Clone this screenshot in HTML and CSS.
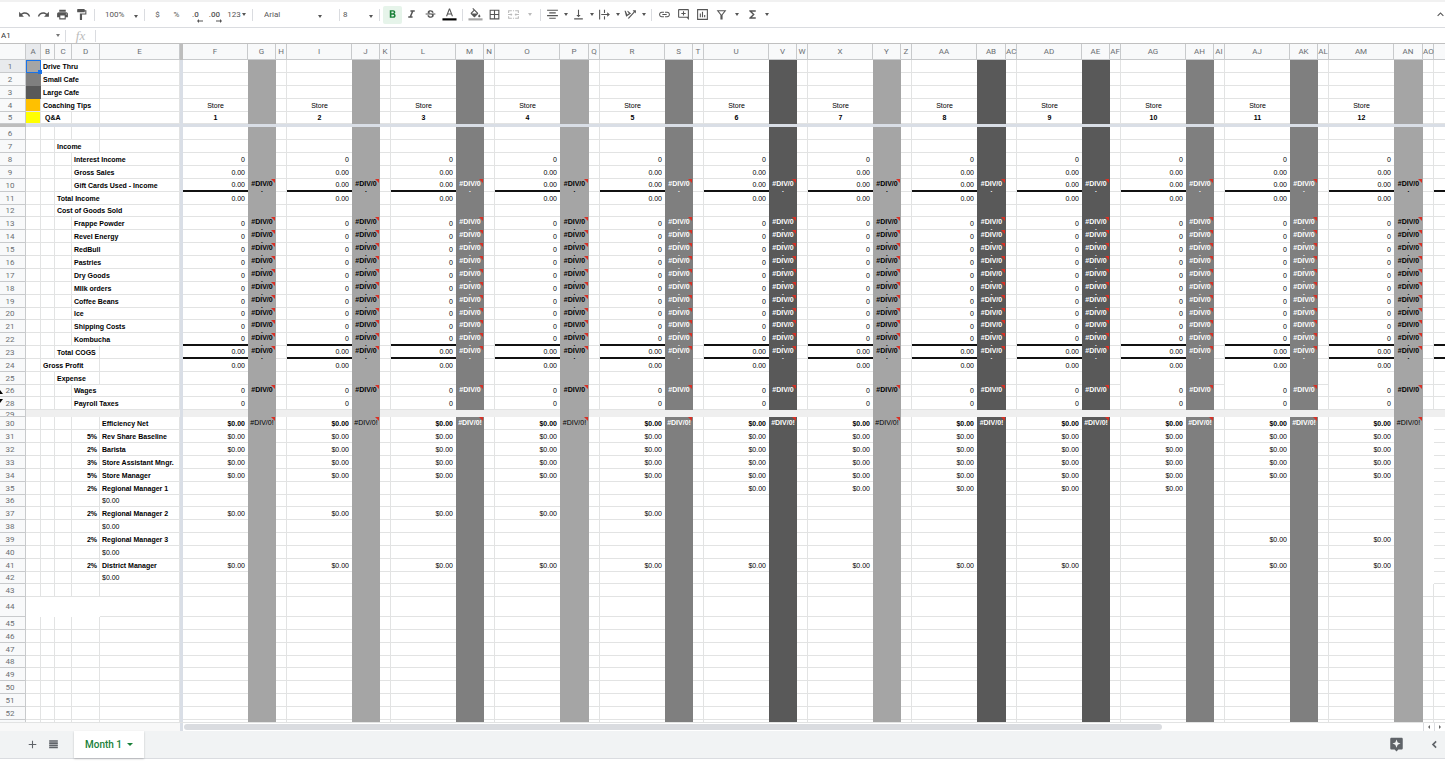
FILE: index.html
```
<!DOCTYPE html>
<html lang="en">
<head>
    <meta charset="UTF-8">
    <meta name="viewport" content="width=device-width, initial-scale=1.0">
    <title>Month 1</title>
    <link rel="stylesheet" href="styles.css">
</head>
<body>
    <header class="toolbar">
        <button class="tool" aria-label="Undo"><svg class="icon" viewBox="0 0 24 24"><path d="M12.5 8c-2.65 0-5.05.99-6.9 2.6L2 7v9h9l-3.62-3.62c1.39-1.16 3.16-1.88 5.12-1.88 3.54 0 6.55 2.31 7.6 5.5l2.37-.78C21.08 11.03 17.15 8 12.5 8z"/></svg></button>
        <button class="tool" aria-label="Redo"><svg class="icon" viewBox="0 0 24 24"><path d="M18.4 10.6C16.55 8.99 14.15 8 11.5 8c-4.65 0-8.58 3.03-9.96 7.22L3.9 16c1.05-3.19 4.05-5.5 7.6-5.5 1.95 0 3.73.72 5.12 1.88L13 16h9V7l-3.6 3.6z"/></svg></button>
        <button class="tool" aria-label="Print"><svg class="icon" viewBox="0 0 24 24"><path d="M19 8H5c-1.66 0-3 1.34-3 3v6h4v4h12v-4h4v-6c0-1.66-1.34-3-3-3zm-3 11H8v-5h8v5zm3-7c-.55 0-1-.45-1-1s.45-1 1-1 1 .45 1 1-.45 1-1 1zm-1-9H6v4h12V3z"/></svg></button>
        <button class="tool" aria-label="Paint format"><svg class="icon" viewBox="0 0 24 24"><path d="M18 4V3c0-.55-.45-1-1-1H5c-.55 0-1 .45-1 1v4c0 .55.45 1 1 1h12c.55 0 1-.45 1-1V6h1v4H9v11c0 .55.45 1 1 1h2c.55 0 1-.45 1-1v-9h8V4h-3z"/></svg></button>
        <span class="sep"></span>
        <label class="picker picker-zoom"><select aria-label="Zoom"><option>100%</option></select></label>
        <span class="sep"></span>
        <button class="tool">$</button>
        <button class="tool">%</button>
        <button class="tool decimal">.0<svg class="decimal-arrow" viewBox="0 0 6 4"><path d="M0 2 2 0v1.500h4v1H2V4z"/></svg></button>
        <button class="tool decimal">.00<svg class="decimal-arrow" viewBox="0 0 6 4"><path d="M6 2 4 0v1.500H0v1h4V4z"/></svg></button>
        <button class="tool formats">123<span class="caret"></span></button>
        <span class="sep"></span>
        <label class="picker picker-font"><select aria-label="Font"><option>Arial</option></select></label>
        <span class="sep"></span>
        <label class="picker picker-size"><select aria-label="Font size"><option>8</option></select></label>
        <span class="sep"></span>
        <button class="tool active" aria-label="Bold"><svg class="icon" viewBox="0 0 24 24"><path d="M15.6 10.79c.97-.67 1.65-1.77 1.65-2.79 0-2.26-1.75-4-4-4H7v14h7.04c2.09 0 3.71-1.7 3.71-3.79 0-1.52-.86-2.82-2.15-3.42zM10 6.5h3c.83 0 1.5.67 1.5 1.5s-.67 1.5-1.5 1.5h-3v-3zm3.5 9H10v-3h3.5c.83 0 1.5.67 1.5 1.5s-.67 1.5-1.5 1.5z"/></svg></button>
        <button class="tool" aria-label="Italic"><svg class="icon" viewBox="0 0 24 24"><path d="M10 4v3h2.21l-3.42 8H6v3h8v-3h-2.21l3.42-8H18V4z"/></svg></button>
        <button class="tool" aria-label="Strikethrough"><svg class="icon" viewBox="0 0 24 24"><path d="M7.2 9.8c-1.2-2.3.5-5 2.900-5.500 3.100-.9 7.600.4 7.600 4.400h-3c0-.3-.1-.6-.1-.8-.2-.6-.6-.9-1.200-1.100-.8-.3-2.100-.2-2.800.3-1.500 1.300.4 2.400 1.800 2.700H7.400c-.1 0-.1 0-.2 0zM21 12v-2H3v2h9.600c1.100.4 2.200.6 2.200 1.900 0 1.400-1.300 1.800-2.500 1.800-1.600 0-2.800-.7-2.900-2.400h-3c0 3.400 3 4.700 5.900 4.700 3.300 0 6.800-1.900 5.300-6H21z"/></svg></button>
        <button class="tool" aria-label="Text colour"><svg class="icon" viewBox="0 0 24 24"><path d="M11 1 5.500 15h2.250l1.120-3h6.250l1.120 3h2.250L13 1h-2zm-1.380 9L12 3.670 14.380 10H9.620z"/><path class="ink" d="M-1 19h26v4H-1z"/></svg></button>
        <span class="sep"></span>
        <button class="tool" aria-label="Fill colour"><svg class="icon" viewBox="0 0 24 24"><path d="M16.560 8.940 7.620 0 6.210 1.410l2.380 2.380-5.150 5.150c-.59.59-.59 1.540 0 2.120l5.500 5.500c.29.29.68.44 1.060.44s.77-.15 1.060-.44l5.500-5.500c.59-.58.59-1.530 0-2.120zM5.210 10 10 5.210 14.790 10H5.210zM19 11.500s-2 2.170-2 3.500c0 1.100.9 2 2 2s2-.9 2-2c0-1.330-2-3.500-2-3.500z"/><path class="fill-ink" d="M-1 19h26v4H-1z"/></svg></button>
        <button class="tool" aria-label="Borders"><svg class="icon" viewBox="0 0 24 24"><path d="M3 3v18h18V3H3zm8 16H5v-6h6v6zm0-8H5V5h6v6zm8 8h-6v-6h6v6zm0-8h-6V5h6v6z"/></svg></button>
        <button class="tool disabled" aria-label="Merge cells"><svg class="icon" viewBox="0 0 24 24"><path d="M2 4h7v2H4v3H2zM11 4h2v2h-2zM15 4h7v5h-2V6h-5zM2 15h2v3h5v2H2zM11 18h2v2h-2zM20 15h2v5h-7v-2h5zM2 11h5V9l3 3-3 3v-2H2zM22 11h-5V9l-3 3 3 3v-2h5z"/></svg></button>
        <button class="drop drop-wide disabled" aria-label="Merge options"><span class="caret"></span></button>
        <span class="sep"></span>
        <button class="tool tool-narrow" aria-label="Horizontal align"><svg class="icon" viewBox="0 0 24 24"><path d="M2 3h20v2H2zM6 8h12v2H6zM2 13h20v2H2zM6 18h12v2H6z"/></svg></button>
        <button class="drop" aria-label="Horizontal align options"><span class="caret"></span></button>
        <button class="tool tool-narrow" aria-label="Vertical align"><svg class="icon" viewBox="0 0 24 24"><path d="M16 13h-3V3h-2v10H8l4 4 4-4zM4 19v2h16v-2H4z"/></svg></button>
        <button class="drop" aria-label="Vertical align options"><span class="caret"></span></button>
        <button class="tool tool-narrow" aria-label="Text wrapping"><svg class="icon" viewBox="0 0 24 24"><path d="M2 3h2v18H2zM11 3h2v6h-2zM11 15h2v6h-2zM6 11h11V8l5 4-5 4v-3H6z"/></svg></button>
        <button class="drop" aria-label="Text wrapping options"><span class="caret"></span></button>
        <button class="tool tool-narrow" aria-label="Text rotation"><svg class="icon" viewBox="0 0 24 24"><path d="M1 5h2l3 7 3-2-3-4 1-1 6 5-9 6zM22 4v6l-2-2L9 20l-2-1L18 7l-2-3z"/></svg></button>
        <button class="drop" aria-label="Text rotation options"><span class="caret"></span></button>
        <span class="sep"></span>
        <button class="tool" aria-label="Insert link"><svg class="icon" viewBox="0 0 24 24"><path d="M3.900 12c0-1.710 1.390-3.100 3.100-3.100h4V7H7c-2.760 0-5 2.240-5 5s2.240 5 5 5h4v-1.900H7c-1.710 0-3.100-1.390-3.100-3.100zM8 13h8v-2H8v2zm9-6h-4v1.900h4c1.710 0 3.100 1.390 3.100 3.100s-1.390 3.100-3.100 3.100h-4V17h4c2.760 0 5-2.240 5-5s-2.240-5-5-5z"/></svg></button>
        <button class="tool" aria-label="Insert comment"><svg class="icon" viewBox="0 0 24 24"><path d="M22 4c0-1.100-.9-2-2-2H4c-1.100 0-2 .9-2 2v12c0 1.100.9 2 2 2h14l4 4V4zm-2 12H4V4h16v12zM11 6h2v3h3v2h-3v3h-2v-3H8V9h3z"/></svg></button>
        <button class="tool" aria-label="Insert chart"><svg class="icon" viewBox="0 0 24 24"><path d="M2 2v20h20V2H2zm18 18H4V4h16v16zM7 10h2v7H7zM11 7h2v10h-2zM15 13h2v4h-2z"/></svg></button>
        <button class="tool" aria-label="Filter"><svg class="icon" viewBox="0 0 24 24"><path d="M3 4h18l-7 9v8h-4v-8L3 4zm4 2 5 6.500L17 6H7z" fill-rule="evenodd"/></svg></button>
        <button class="drop drop-filter" aria-label="Filter views"><span class="caret"></span></button>
        <button class="tool" aria-label="Functions"><svg class="icon" viewBox="0 0 24 24"><path d="M18 4H6v2l6.500 6L6 18v2h12v-3h-7l5-5-5-5h7z"/></svg></button>
        <button class="drop" aria-label="Function list"><span class="caret"></span></button>
        <button class="tool collapse" aria-label="Hide the menus"><svg class="icon" viewBox="0 0 24 24"><path d="m12 8-6 6 1.410 1.410L12 10.830l4.590 4.580L18 14z"/></svg></button>
    </header>

    <div class="formula-bar">
        <input class="name-box" aria-label="Name box" value="A1">
        <span class="caret"></span>
        <span class="sep"></span>
        <span class="fx">fx</span>
        <span class="sep"></span>
        <input class="formula" aria-label="Formula">
    </div>

    <main class="sheet">
        <table class="grid">
            <colgroup id="cols"></colgroup>
            <thead><tr id="letters"></tr></thead>
            <tbody id="rows"></tbody>
        </table>
    </main>

    <div class="scroll-row">
        <div class="scroll-corner"></div>
        <div class="scroll-track"><div class="scroll-thumb"></div></div>
        <button class="scroll-arrow" aria-label="Scroll left"><span class="arrow-left"></span></button>
        <button class="scroll-arrow" aria-label="Scroll right"><span class="arrow-right"></span></button>
    </div>

    <footer class="tabs">
        <button class="tab-tool" aria-label="Add sheet"><svg class="icon" viewBox="0 0 24 24"><path d="M19 13h-6v6h-2v-6H5v-2h6V5h2v6h6z"/></svg></button>
        <button class="tab-tool" aria-label="All sheets"><svg class="icon" viewBox="0 0 24 24"><path d="M4 4h16v3H4zM4 8h16v3H4zM4 12h16v3H4zM4 16h16v3H4z"/></svg></button>
        <button class="tab">Month 1<span class="caret"></span></button>
        <button class="tab-tool explore" aria-label="Explore"><svg class="icon" viewBox="0 0 24 24"><path d="M20 1H4c-1.100 0-2 .9-2 2v15c0 1.100.9 2 2 2h5l3 3 3-3h5c1.100 0 2-.9 2-2V3c0-1.100-.9-2-2-2zm-6.100 11.400L12 17l-1.900-4.600L5.500 10.500l4.600-1.900L12 4l1.900 4.600 4.600 1.900z"/></svg></button>
        <button class="tab-tool" aria-label="Show side panel"><svg class="icon" viewBox="0 0 24 24"><path d="M16 7.400 14 5l-7 7 7 7 2-2.400-4.600-4.600z"/></svg></button>
    </footer>

    <script src="script.js"></script>
</body>
</html>
```
FILE: styles.css
```
* {
    margin: 0;
    padding: 0;
    box-sizing: border-box;
}

body {
    height: 100vh;
    display: flex;
    flex-direction: column;
    overflow: hidden;
    padding-bottom: 3px;
    background: #fff;
    color: #000;
    font-family: "Liberation Sans", Arial, sans-serif;
    font-size: 7px;
}

button,
select,
input {
    border: none;
    background: none;
    color: inherit;
    font-family: Roboto, sans-serif;
    font-size: 8px;
    outline: none;
}

/* Toolbar */
.toolbar {
    flex: none;
    display: flex;
    align-items: center;
    height: 28px;
    padding-left: 15px;
    border-top: 2px solid #f1f1f1;
    border-bottom: 1px solid #dadce0;
    color: #555;
}

.tool {
    flex: none;
    display: flex;
    align-items: center;
    justify-content: center;
    width: 19px;
    height: 18px;
}

.tool-narrow {
    width: 17px;
}

.active {
    background: #e6f4ea;
    color: #188038;
    border-radius: 2px;
}

.disabled {
    color: #bbb;
}

.icon {
    width: 13px;
    height: 13px;
    fill: currentColor;
    overflow: visible;
}

.ink {
    fill: #000;
}

.fill-ink {
    fill: #a5a5a5;
}

.sep {
    flex: none;
    width: 1px;
    height: 12px;
    margin: 0 3px;
    background: #dadce0;
}

.caret {
    flex: none;
    width: 0;
    height: 0;
    border: 2px solid transparent;
    border-top: 3px solid currentColor;
    border-bottom: none;
}

.decimal {
    position: relative;
    font-weight: 500;
}

.decimal-arrow {
    position: absolute;
    right: 2px;
    bottom: 1px;
    width: 6px;
    height: 4px;
    fill: currentColor;
}

.formats {
    width: 25px;
    gap: 1px;
}

.picker {
    flex: none;
    position: relative;
}

.picker select {
    width: 100%;
    appearance: none;
}

.picker::after {
    content: "";
    position: absolute;
    right: 3px;
    top: 5px;
    border: 2px solid transparent;
    border-top: 3px solid currentColor;
    border-bottom: none;
}

.picker-zoom {
    width: 43px;
    padding-left: 7px;
}

.picker-font {
    width: 80px;
    padding-left: 8px;
}

.picker-font::after {
    right: 14px;
}

.picker-size {
    width: 33px;
}

.drop {
    flex: none;
    display: flex;
    align-items: center;
    justify-content: center;
    width: 9px;
    height: 18px;
}

.drop-wide {
    width: 14px;
}

.drop-filter {
    width: 12px;
}

.collapse {
    margin-left: auto;
    width: 10px;
}

/* Formula bar */
.formula-bar {
    flex: none;
    display: flex;
    align-items: center;
    height: 16px;
    border-bottom: 1px solid #c0c0c0;
    color: #333;
}

.name-box {
    width: 56px;
    padding-left: 1px;
}

.formula-bar .caret {
    margin-right: 2px;
    color: #777;
}

.fx {
    width: 23px;
    text-align: center;
    color: #bbb;
    font: italic 13px/15px "Liberation Serif", serif;
}

.formula {
    flex: 1;
}

/* Grid */
.sheet {
    flex: 1;
    min-height: 0;
    overflow: hidden;
}

.grid {
    width: 0;
    table-layout: fixed;
    border-collapse: separate;
    border-spacing: 0;
}

.col-head { width: 26px; }
.col-a { width: 15px; }
.col-b { width: 14px; }
.col-c { width: 17px; }
.col-d { width: 28px; }
.col-e { width: 80px; }
.col-freeze { width: 3px; }
.col-value { width: 65px; }
.col-pct { width: 28px; }
.col-pct-wide { width: 29px; }
.col-gap { width: 11px; }

.grid th {
    background: #f8f9fa;
    border-right: 1px solid #c8cacc;
    border-bottom: 1px solid #c8cacc;
    color: #6b6f73;
    font-family: Roboto, sans-serif;
    font-size: 8px;
    font-weight: 400;
    line-height: 11px;
    text-align: center;
    white-space: nowrap;
}

.grid thead th {
    height: 16px;
}

.grid tbody th {
    position: relative;
    padding-right: 5px;
}

.grid th.selected {
    background: #e8eaed;
}

.grid th.frozen {
    background: #bdbdbd;
    border: none;
}

.grid td {
    position: relative;
    height: 13px;
    border-right: 1px solid #e2e3e3;
    border-bottom: 1px solid #e2e3e3;
    line-height: 11px;
    vertical-align: bottom;
    white-space: nowrap;
    overflow: hidden;
}

.grid .tight td {
    height: 12px;
}

.grid .tall td {
    height: 20px;
}

.grid td.label {
    padding-left: 2px;
    font-weight: 700;
}

.grid td.indent {
    padding-left: 4px;
}

.grid td.plain {
    padding-left: 2px;
}

.grid td.share {
    padding-right: 2px;
    font-weight: 700;
    text-align: right;
}

.grid td.value {
    border-right: none;
    padding-right: 3px;
    text-align: right;
}

.grid td.center {
    padding: 0;
    text-align: center;
}

.grid td.bold {
    font-weight: 700;
}

.grid td.total {
    border-bottom: 2px solid #111;
    line-height: 10px;
}

.grid td.freeze,
.grid .freeze-row td {
    height: 3px;
    border: none;
    background: #d9dee6;
}

.grid .freeze-row th {
    height: 3px;
    padding: 0;
    border: none;
    background: #bdbdbd;
}

.grid td.light,
.grid td.medium,
.grid td.dark {
    border: none;
}

.light { background: #a5a5a5; }
.medium { background: #7f7f7f; }
.dark { background: #595959; }
.orange { background: #ffc000; }
.yellow { background: #ffff00; }

.medium,
.dark {
    color: #fff;
}

.grid .band td {
    height: 7px;
    border: none;
}

.grid .band td:not(.light):not(.freeze) {
    background: #efefef;
}

.grid .band th {
    padding: 0 5px 0 0;
    line-height: 0;
}

.row-number {
    display: block;
    height: 6px;
    line-height: 9px;
    overflow: hidden;
}

.grid td.blank {
    border: none;
}

.grid td.no-line {
    border-bottom-color: transparent;
}

/* the "!" wraps to a second line that the row mostly hides */
.error {
    height: 13px;
    font-weight: 700;
    line-height: 10px;
    text-align: center;
    overflow: hidden;
}

.error-full {
    line-height: 12px;
}

.light .error-full {
    font-weight: 400;
}

.tight .error {
    height: 12px;
}

.error::after {
    content: "";
    position: absolute;
    top: 0;
    right: 1px;
    border-top: 4px solid #d93025;
    border-left: 4px solid transparent;
}

.grid td.cursor {
    overflow: visible;
    border: 1px solid #1a73e8;
}

.cursor::after {
    content: "";
    position: absolute;
    right: -2px;
    bottom: -2px;
    width: 4px;
    height: 4px;
    background: #1a73e8;
    z-index: 1;
}

.hidden-above::before,
.hidden-below::before {
    content: "";
    position: absolute;
    left: -3px;
    border: 3px solid transparent;
}

.hidden-below::before {
    bottom: 2px;
    border-top: none;
    border-bottom: 4px solid #000;
}

.hidden-above::before {
    top: 2px;
    border-bottom: none;
    border-top: 4px solid #000;
}

/* Horizontal scrollbar */
.scroll-row {
    flex: none;
    display: flex;
    height: 9px;
    border-top: 1px solid #e2e3e3;
}

.scroll-corner {
    width: 183px;
    background: #f8f8f8;
    border-right: 3px solid #d9dee6;
}

.scroll-track {
    flex: 1;
    padding: 1px;
}

.scroll-thumb {
    width: 79%;
    height: 6px;
    border-radius: 3px;
    background: #dadce0;
}

.scroll-arrow {
    display: flex;
    align-items: center;
    justify-content: center;
    width: 11px;
    border-left: 1px solid #dadce0;
}

.arrow-left,
.arrow-right {
    border: 2px solid transparent;
}

.arrow-left {
    border-left: none;
    border-right-color: #666;
}

.arrow-right {
    border-right: none;
    border-left-color: #666;
}

/* Sheet tabs */
.tabs {
    flex: none;
    display: flex;
    align-items: center;
    height: 28px;
    padding-left: 22px;
    background: #f1f3f4;
    border-bottom: 1px solid #dadce0;
    color: #5f6368;
}

.tab-tool {
    display: flex;
    align-items: center;
    justify-content: center;
    width: 21px;
    height: 20px;
}

.tab {
    display: flex;
    align-items: center;
    justify-content: center;
    gap: 5px;
    align-self: stretch;
    width: 70px;
    margin-left: 10px;
    background: #fff;
    box-shadow: 0 1px 2px rgba(0, 0, 0, 0.2);
    color: #188038;
    font-size: 10px;
    font-weight: 500;
}

.tab .caret {
    border-width: 3px 3px 0;
}

.explore {
    margin-left: auto;
    margin-right: 17px;
}

.explore .icon {
    width: 15px;
    height: 15px;
}
```
FILE: script.js
```
const shades = ['light', 'light', 'medium', 'light', 'medium', 'dark', 'light', 'dark', 'dark', 'medium', 'medium', 'light'];
const stores = shades.length;

// row headings: [column, text, share]
const labels = {
    1: ['B', 'Drive Thru'],
    2: ['B', 'Small Cafe'],
    3: ['B', 'Large Cafe'],
    4: ['B', 'Coaching Tips'],
    5: ['Q', 'Q&amp;A'],
    7: ['C', 'Income'],
    8: ['D', 'Interest Income'],
    9: ['D', 'Gross Sales'],
    10: ['D', 'Gift Cards Used - Income'],
    11: ['C', 'Total Income'],
    12: ['C', 'Cost of Goods Sold'],
    13: ['D', 'Frappe Powder'],
    14: ['D', 'Revel Energy'],
    15: ['D', 'RedBull'],
    16: ['D', 'Pastries'],
    17: ['D', 'Dry Goods'],
    18: ['D', 'MIlk orders'],
    19: ['D', 'Coffee Beans'],
    20: ['D', 'Ice'],
    21: ['D', 'Shipping Costs'],
    22: ['D', 'Kombucha'],
    23: ['C', 'Total COGS'],
    24: ['B', 'Gross Profit'],
    25: ['C', 'Expense'],
    26: ['D', 'Wages'],
    28: ['D', 'Payroll Taxes'],
    30: ['E', 'Efficiency Net', ''],
    31: ['E', 'Rev Share Baseline', '5%'],
    32: ['E', 'Barista', '2%'],
    33: ['E', 'Store Assistant Mngr.', '3%'],
    34: ['E', 'Store Manager', '5%'],
    35: ['E', 'Regional Manager 1', '2%'],
    37: ['E', 'Regional Manager 2', '2%'],
    39: ['E', 'Regional Manager 3', '2%'],
    41: ['E', 'District Manager', '2%']
};

const keyColours = { 1: 'light cursor', 2: 'medium', 3: 'dark', 4: 'orange', 5: 'yellow' };
const tightRows = [5, 12, 20, 26, 36, 42, 48];
const totalRows = [10, 22, 23];
const errorRows = [10, 13, 14, 15, 16, 17, 18, 19, 20, 21, 22, 23, 26];

function letter(n) {
    return n < 26 ? String.fromCharCode(65 + n) : 'A' + String.fromCharCode(65 + n - 26);
}

function valueOf(row, store) {
    if (row === 4) return 'Store';
    if (row === 5) return store;
    if ([9, 10, 11, 23, 24].includes(row)) return '0.00';
    if (row === 8 || (row >= 13 && row <= 22) || row === 26 || row === 28) return '0';
    if (row >= 30 && row <= 34) return '$0.00';
    if (row === 35 && store >= 6 && store <= 10) return '$0.00';
    if (row === 37 && store <= 5) return '$0.00';
    if (row === 39 && store >= 11) return '$0.00';
    if (row === 41 && store !== 10) return '$0.00';
    return '';
}

function td(cls, text = '', span = 1) {
    return `<td class="${cls}" colspan="${span}">${text}</td>`;
}

function leftCells(row) {
    if (row === 44) return td('blank', '', 4) + td('');
    let html = td(keyColours[row] || '');
    const [col, text, share] = labels[row] || [];
    if (col === 'B') return html + td('label', text, 3) + td('');
    if (col === 'Q') return html + td('label indent', text, 2) + td('') + td('');
    html += td('');
    if (col === 'C') {
        return html + (text.length > 10 ? td('label', text, 3) : td('label', text, 2) + td(''));
    }
    html += td('');
    if (col === 'D') return html + td('label', text, 2);
    if (col === 'E') return html + td('share', share) + td('label', text);
    return html + td('') + ([36, 38, 40, 42].includes(row) ? td('plain', '$0.00') : td(''));
}

function storeCells(row) {
    let html = '';
    for (let s = 1; s <= stores; s++) {
        let cls = 'value';
        if (row === 4 || row === 5) cls += ' center';
        if (row === 5 || row === 30) cls += ' bold';
        if (totalRows.includes(row)) cls += ' total';
        if (row === 25 && s > 9) cls += ' no-line';
        html += td(cls, valueOf(row, s));

        let error = '';
        if (errorRows.includes(row)) error = '<div class="error">#DIV/0<br>!</div>';
        if (row === 30) error = '<div class="error error-full">#DIV/0!</div>';
        html += td(shades[s - 1], error);
        html += td(s === stores && row >= 30 && row <= 42 ? 'blank' : '');
    }
    return html + td(totalRows.includes(row) ? 'value total' : 'value');
}

// columns
let cols = ['head', 'a', 'b', 'c', 'd', 'e', 'freeze'];
for (let s = 1; s <= stores; s++) {
    cols.push('value', s % 4 === 0 ? 'pct-wide' : 'pct', 'gap');
}
cols.push('value');
document.getElementById('cols').innerHTML = cols.map(c => `<col class="col-${c}">`).join('');

let head = '<th></th>';
for (let i = 0; i < 5 + stores * 3; i++) {
    if (i === 5) head += '<th class="frozen"></th>';
    head += `<th scope="col"${i === 0 ? ' class="selected"' : ''}>${letter(i)}</th>`;
}
document.getElementById('letters').innerHTML = head + '<th></th>';

// rows, 27 is hidden
let body = '';
for (let row = 1; row <= 53; row++) {
    if (row === 27) continue;
    let cls = '';
    if (tightRows.includes(row)) cls = 'tight';
    if (row === 29) cls = 'band';
    if (row === 44) cls = 'tall';
    let thCls = '';
    if (row === 1) thCls = 'selected';
    if (row === 26) thCls = 'hidden-below';
    if (row === 28) thCls = 'hidden-above';
    let number = row === 29 ? '<span class="row-number">29</span>' : row;
    if (row === 53) number = '';
    body += `<tr class="${cls}"><th scope="row" class="${thCls}">${number}</th>${leftCells(row)}${td('freeze')}${storeCells(row)}</tr>`;
    if (row === 5) {
        body += `<tr class="freeze-row"><th></th><td colspan="${cols.length - 1}"></td></tr>`;
    }
}
document.getElementById('rows').innerHTML = body;
```
